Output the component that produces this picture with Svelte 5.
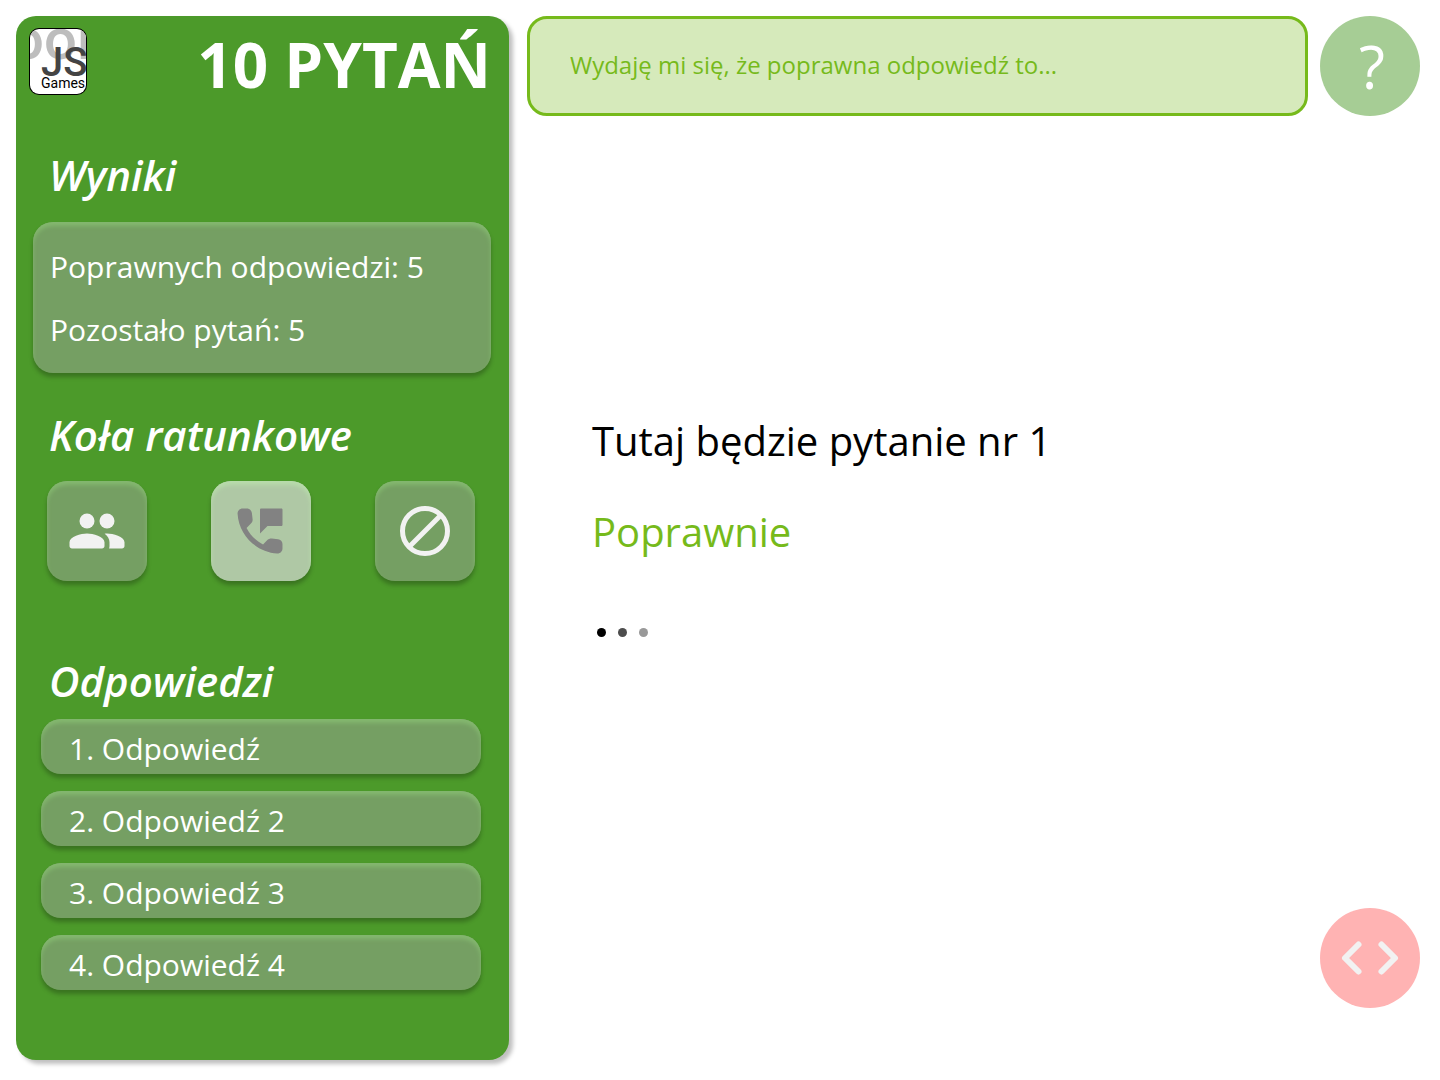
<script>
  let guess = $state('');

  const results = { correct: 5, remaining: 5 };
  const answers = ['Odpowiedź', 'Odpowiedź 2', 'Odpowiedź 3', 'Odpowiedź 4'];
  const lifelines = [
    { id: 'people', label: 'Pytanie do publiczności', used: false },
    { id: 'phone', label: 'Telefon do przyjaciela', used: true },
    { id: 'block', label: 'Odrzuć odpowiedzi', used: false }
  ];
</script>

<div class="app">
  <aside class="sidebar">
    <header class="brand">
      <svg class="logo" viewBox="0 0 58 67" role="img" aria-label="JS Games">
        <defs>
          <clipPath id="logo-clip"><rect x="1" y="1" width="56" height="65" rx="9" /></clipPath>
        </defs>
        <rect x="0" y="0" width="58" height="67" rx="10" fill="#000" />
        <rect x="1" y="1" width="56" height="65" rx="9" fill="#fff" />
        <g clip-path="url(#logo-clip)">
          <text x="-18" y="31" font-size="58" font-weight="500" fill="#bdbdbd">ool</text>
          <text x="12" y="48" font-size="40" font-weight="500" fill="#444">JS</text>
          <text x="12" y="60" font-size="14" fill="#000">Games</text>
        </g>
      </svg>
      <h1>10 PYTAŃ</h1>
    </header>

    <section class="results">
      <h2>Wyniki</h2>
      <div class="panel">
        <p>Poprawnych odpowiedzi: {results.correct}</p>
        <p>Pozostało pytań: {results.remaining}</p>
      </div>
    </section>

    <section class="lifelines">
      <h2>Koła ratunkowe</h2>
      <div class="lifeline-row">
        {#each lifelines as item (item.id)}
          <button class="lifeline" class:used={item.used} type="button" aria-label={item.label}>
            <svg viewBox="0 0 24 24" aria-hidden="true">
              {#if item.id === 'people'}
                <circle cx="8" cy="8" r="3" />
                <circle cx="16" cy="8" r="3" />
                <path d="M8 13c-2.33 0-7 1.17-7 3.5V18c0 .55.45 1 1 1h12c.55 0 1-.45 1-1v-1.5c0-2.33-4.67-3.5-7-3.5zm8 0c-.29 0-.62.02-.97.05.02.01.03.03.04.04 1.14.83 1.93 1.94 1.93 3.41V18c0 .35-.07.69-.18 1H22c.55 0 1-.45 1-1v-1.5c0-2.33-4.67-3.5-7-3.5z" />
              {:else if item.id === 'phone'}
                <path d="M18.83 15.26l-2.54-.29c-.61-.07-1.21.14-1.64.57l-1.84 1.84c-2.83-1.44-5.15-3.75-6.59-6.59l1.85-1.85c.43-.43.64-1.03.57-1.64l-.29-2.52c-.12-1.01-.97-1.77-1.99-1.77H4.63c-1.13 0-2.07.94-2 2.07.53 8.54 7.36 15.36 15.89 15.89 1.13.07 2.07-.87 2.07-2v-1.73c.01-1.01-.75-1.86-1.76-1.98z" />
                <path d="M11.6 3.5V13l3-3h5.5c.28 0 .5-.22.5-.5v-6c0-.28-.22-.5-.5-.5h-8c-.28 0-.5.22-.5.5z" />
              {:else}
                <circle cx="12" cy="12" r="9" fill="none" stroke="currentColor" stroke-width="2" />
                <path d="M5.8 18.2L18.2 5.8" fill="none" stroke="currentColor" stroke-width="2" />
              {/if}
            </svg>
          </button>
        {/each}
      </div>
    </section>

    <section class="answers">
      <h2>Odpowiedzi</h2>
      <ol>
        {#each answers as answer, i}
          <li>{i + 1}. {answer}</li>
        {/each}
      </ol>
    </section>
  </aside>

  <main>
    <form class="guess" onsubmit={(e) => e.preventDefault()}>
      <input
        type="text"
        aria-label="Twoja odpowiedź"
        placeholder="Wydaję mi się, że poprawna odpowiedź to..."
        bind:value={guess}
      />
      <button class="round help" type="button" aria-label="Pomoc">?</button>
    </form>

    <section class="question">
      <p class="prompt">Tutaj będzie pytanie nr 1</p>
      <p class="verdict">Poprawnie</p>
      <div class="dots" aria-hidden="true"><span></span><span></span><span></span></div>
    </section>

    <button class="round code" type="button" aria-label="Kod źródłowy">
      <svg viewBox="0 0 100 100" aria-hidden="true">
        <path d="M38.5 36.5L25 50L38.5 63.5M61.5 36.5L75 50L61.5 63.5" />
      </svg>
    </button>
  </main>
</div>

<style>
  :global(body) {
    margin: 0;
    background: #fff;
  }

  .app {
    box-sizing: border-box;
    min-height: 100vh;
    padding: 16px 20px 20px 16px;
    display: grid;
    grid-template-columns: minmax(0, 493fr) minmax(0, 893fr);
    gap: 18px;
    font-family: 'Open Sans', 'Noto Sans', sans-serif;
    color: #000;
  }

  h1,
  h2,
  p,
  ol {
    margin: 0;
    padding: 0;
  }

  button {
    padding: 0;
    border: 0;
    font-family: inherit;
    cursor: pointer;
  }

  .sidebar {
    border-radius: 20px;
    background: #4c9a2a;
    box-shadow: 4px 4px 4px rgba(0, 0, 0, 0.25);
    color: #fff;
  }

  .brand {
    display: flex;
    justify-content: space-between;
    padding: 12px 18px 0 13px;
  }

  .logo {
    width: 58px;
    height: 67px;
    font-family: Roboto, sans-serif;
  }

  h1 {
    font-size: 62px;
    font-weight: 700;
    line-height: 72px;
    white-space: nowrap;
  }

  h2 {
    padding-left: 33px;
    font-size: 42px;
    font-weight: 600;
    font-style: italic;
    line-height: 56px;
  }

  .results {
    padding-top: 47px;
  }

  .lifelines {
    padding-top: 34px;
  }

  .answers {
    padding-top: 72px;
  }

  .panel,
  .lifeline,
  li {
    border-radius: 20px;
    background: #759f63;
    box-shadow:
      0 4px 4px rgba(0, 0, 0, 0.25),
      inset 0 4px 4px #84b86f;
  }

  .panel {
    display: grid;
    gap: 23px;
    margin: 19px 18px 0 17px;
    padding: 25px 17px 23px;
    font-size: 30px;
    line-height: 40px;
  }

  .lifeline-row {
    display: flex;
    justify-content: space-between;
    margin: 18px 34px 0 31px;
  }

  .lifeline {
    display: grid;
    place-items: center;
    width: 100px;
    height: 100px;
    color: #f2f2f2;
  }

  .lifeline.used {
    background: #afc8a5;
    color: #828282;
    box-shadow:
      0 4px 4px rgba(0, 0, 0, 0.25),
      inset 0 4px 4px #b8dcab;
  }

  .lifeline svg {
    width: 60px;
    height: 60px;
    fill: currentColor;
  }

  ol {
    display: grid;
    gap: 17px;
    margin: 10px 28px 0 25px;
    list-style: none;
  }

  li {
    padding: 10px 28px 5px;
    font-size: 30px;
    line-height: 40px;
  }

  main {
    display: flex;
    flex-direction: column;
  }

  .guess {
    display: flex;
    gap: 12px;
  }

  input {
    box-sizing: border-box;
    flex: 1;
    min-width: 0;
    height: 100px;
    padding: 0 40px 4px;
    border: 3px solid #76ba1b;
    border-radius: 20px;
    outline: 0;
    background: #d6eabb;
    color: #76ba1b;
    font-family: inherit;
    font-size: 24px;
  }

  input::placeholder {
    color: #76ba1b;
    opacity: 1;
  }

  .round {
    flex: none;
    width: 100px;
    height: 100px;
    border-radius: 50%;
  }

  .help {
    padding-left: 4px;
    background: #a6cd95;
    color: #fff;
    font-size: 60px;
    font-weight: 500;
    line-height: 98px;
  }

  .question {
    flex: 1;
    display: flex;
    flex-direction: column;
    justify-content: center;
    padding: 26px 0 0 65px;
  }

  .prompt {
    font-size: 40px;
    line-height: 56px;
  }

  .verdict {
    margin-top: 35px;
    color: #76ba1b;
    font-size: 40px;
    line-height: 56px;
  }

  .dots {
    display: flex;
    gap: 12px;
    margin-top: 68px;
    padding-left: 5px;
  }

  .dots span {
    width: 9px;
    height: 9px;
    border-radius: 50%;
    background: #000;
  }

  .dots span:nth-child(2) {
    background: #4d4d4d;
  }

  .dots span:nth-child(3) {
    background: #999;
  }

  .code {
    align-self: flex-end;
    margin-bottom: 52px;
    background: #ffb3b3;
  }

  .code svg {
    display: block;
    width: 100%;
    fill: none;
    stroke: #f2f2f2;
    stroke-width: 6;
    stroke-linecap: round;
    stroke-linejoin: round;
  }
</style>
